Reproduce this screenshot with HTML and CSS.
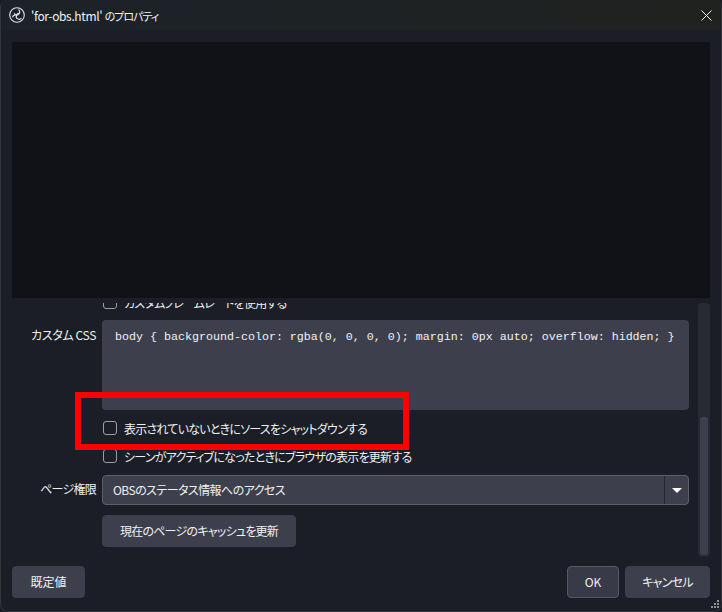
FILE: index.html
```html
<!DOCTYPE html>
<html lang="ja">
<head>
<meta charset="utf-8">
<title>'for-obs.html' のプロパティ</title>
<link rel="stylesheet" href="styles.css">
</head>
<body>
<div class="window">
  <header class="titlebar">
    <svg class="logo" width="16" height="16" viewBox="0 0 16 16" fill="none" stroke="#e4e6e6" stroke-width="1.1">
      <circle cx="8" cy="8" r="7.3"/>
      <path d="M9.4 2.5a2.9 2.9 0 1 1-4.2 3.6M12.4 11.2a2.9 2.9 0 1 1-1.7-4.7M3.4 10.4a2.9 2.9 0 0 1 4.9-1.6"/>
    </svg>
    <span class="title">'for-obs.html' <span class="title-ja">のプロパティ</span></span>
    <svg class="close" width="11" height="11" viewBox="0 0 11 11" stroke="#f2f2f2" stroke-width="1"><path d="M.5.5l10 10M10.5.5l-10 10"/></svg>
  </header>
  <div class="preview"></div>
  <div class="settings">
    <div class="scroll-view">
      <div class="row row-cut">
        <span class="check"></span><span class="check-label">カスタムフレームレートを使用する</span>
      </div>
      <div class="form-row form-css">
        <label class="field-label css-label">カスタム CSS</label>
        <div class="textarea">body { background-color: rgba(0, 0, 0, 0); margin: 0px auto; overflow: hidden; }</div>
      </div>
      <div class="row row-shutdown">
        <span class="check"></span><span class="check-label">表示されていないときにソースをシャットダウンする</span>
      </div>
      <div class="row row-refresh">
        <span class="check"></span><span class="check-label">シーンがアクティブになったときにブラウザの表示を更新する</span>
      </div>
      <div class="form-row form-select">
        <label class="field-label">ページ権限</label>
        <div class="select">
          <span class="select-value">OBSのステータス情報へのアクセス</span>
          <span class="select-arrow"></span>
        </div>
      </div>
      <div class="form-row form-button">
        <button class="btn btn-cache">現在のページのキャッシュを更新</button>
      </div>
    </div>
    <div class="scrollbar"><div class="thumb"></div></div>
  </div>
  <footer class="footer">
    <button class="btn btn-default">既定値</button>
    <span class="spacer"></span>
    <button class="btn btn-ok">OK</button>
    <button class="btn btn-cancel">キャンセル</button>
  </footer>
  <div class="highlight"></div>
  <svg class="grip" width="10" height="10" viewBox="0 0 10 10" fill="#8f9197">
    <rect x="7" y="0" width="2" height="2"/>
    <rect x="4" y="3" width="2" height="2"/><rect x="7" y="3" width="2" height="2"/>
    <rect x="1" y="6" width="2" height="2"/><rect x="4" y="6" width="2" height="2"/><rect x="7" y="6" width="2" height="2"/>
  </svg>
</div>
</body>
</html>
```
FILE: styles.css
```css
* { box-sizing: border-box; }
html, body { margin: 0; padding: 0; background: #1b1d25; }
body { width: 722px; height: 612px; overflow: hidden; }
.window {
  position: relative;
  width: 722px;
  height: 612px;
  display: flex;
  flex-direction: column;
  background: #1b1e26;
  border: 1px solid #33353b;
  border-width: 0 1px 1px 1px;
  border-radius: 8px;
  overflow: hidden;
  color: #f0f1f3;
  font-family: "Noto Sans CJK JP", "Liberation Sans", sans-serif;
  font-size: 12px;
  font-feature-settings: "palt";
  letter-spacing: -0.75px;
}
.titlebar {
  height: 30px;
  flex: none;
  display: flex;
  align-items: center;
  padding: 0 9px 0 8px;
  background: linear-gradient(90deg, #1b2229, #20221f);
}
.logo { flex: none; }
.title { margin-left: 6px; font-size: 12px; flex: 1; color: #f3f4f5; letter-spacing: -0.35px; }
.title-ja { font-size: 11px; letter-spacing: -1px; }
.close { flex: none; }
.preview {
  flex: none;
  height: 256px;
  margin: 12px 11px 0;
  background: #111217;
}
.settings {
  flex: none;
  height: 259px;
  display: flex;
  padding: 5px 11px 0;
  gap: 8px;
}
.scroll-view {
  flex: 1;
  min-width: 0;
  overflow: hidden;
  padding-right: 1px;
}
.row {
  display: flex;
  align-items: center;
  margin-left: 91px;
  height: 14px;
}
.row-cut { margin-top: -8px; }
.row-shutdown { margin-top: 11px; }
.row-refresh { margin-top: 14px; }
.check {
  flex: none;
  width: 14px;
  height: 14px;
  border: 1px solid #9b9da3;
  border-radius: 3px;
  background: #1b1e26;
}
.check-label { margin-left: 7px; white-space: nowrap; }
.form-row { display: flex; align-items: flex-start; }
.form-css { margin-top: 11px; }
.field-label {
  flex: none;
  width: 84px;
  margin-right: 6px;
  text-align: right;
  line-height: 28px;
}
.css-label { line-height: 30px; letter-spacing: -0.35px; }
.textarea {
  flex: 1;
  height: 90px;
  background: #3d404c;
  border-radius: 4px;
  padding: 9px 0 0 13px;
  font-family: "Liberation Mono", monospace;
  font-size: 11.67px;
  line-height: 16px;
  letter-spacing: 0;
  white-space: nowrap;
  font-feature-settings: normal;
}
.form-select { margin-top: 12px; }
.select {
  flex: 1;
  height: 30px;
  display: flex;
  align-items: center;
  background: #3d404c;
  border: 1px solid #5b5e6b;
  border-radius: 4px;
}
.select-value { flex: 1; padding: 0 0 2px 10px; letter-spacing: -0.55px; }
.select-arrow {
  width: 24px;
  height: 100%;
  border-left: 1px solid #24262e;
  position: relative;
}
.select-arrow::after {
  content: "";
  position: absolute;
  left: 7px;
  top: 12px;
  border-style: solid;
  border-width: 5px 5px 0;
  border-color: #fff transparent transparent;
}
.form-button { margin-top: 10px; padding-left: 90px; }
.btn {
  height: 32px;
  padding: 0 0 2px;
  border: 1px solid #3d404c;
  border-radius: 4px;
  background: #3d404c;
  color: #f0f1f3;
  font: inherit;
  letter-spacing: inherit;
  font-feature-settings: "palt";
}
.btn-cache { width: 194px; }
.scrollbar {
  flex: none;
  width: 12px;
  margin-top: 0;
  padding: 114px 2px 2px;
  background: #272a33;
  border-radius: 4px;
}
.thumb { height: 100%; background: #3d404c; border-radius: 3px; }
.footer {
  flex: none;
  display: flex;
  padding: 9px 11px 0;
  gap: 6px;
}
.spacer { flex: 1; }
.btn-default { width: 73px; letter-spacing: 0; }
.btn-ok { width: 52px; border-color: #555865; background: #383b47; letter-spacing: 0; }
.btn-cancel { width: 85px; }
.highlight {
  position: absolute;
  left: 74px;
  top: 392px;
  width: 334px;
  height: 58px;
  border: 6px solid #ff0000;
}
.grip { position: absolute; right: 1px; bottom: 1px; }
```
